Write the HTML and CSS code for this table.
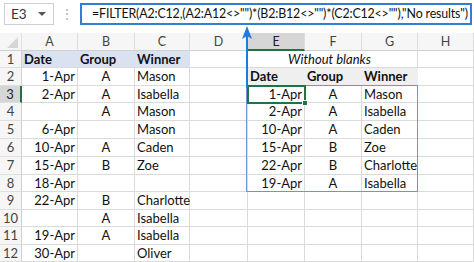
FILE: index.html
```html
<!DOCTYPE html>
<html>
<head>
<meta charset="utf-8">
<link rel="stylesheet" href="styles.css">
</head>
<body>
<div class="page">
  <div class="topbar">
    <div class="namebox"><span class="ref">E3</span><span class="caret"></span></div>
    <div class="dots">⋮</div>
    <div class="formula">=FILTER(A2:C12,(A2:A12&lt;&gt;"")*(B2:B12&lt;&gt;"")*(C2:C12&lt;&gt;""),"No results")</div>
  </div>
  <div class="sheet">
    <div class="h corner"><svg width="22" height="18" viewBox="0 0 22 18"><polygon points="18,4 18,15 7,15" fill="#d6d6d6"/></svg></div>
    <div class="h">A</div><div class="h">B</div><div class="h">C</div><div class="h">D</div><div class="h sel">E</div><div class="h">F</div><div class="h">G</div><div class="h">H</div>

    <div class="r">1</div><div class="c b fillb">Date</div><div class="c b fillb">Group</div><div class="c b fillb">Winner</div><div class="c"></div><div class="c it merged">Without blanks</div><div class="c"></div>

    <div class="r">2</div><div class="c rt">1-Apr</div><div class="c ct">A</div><div class="c">Mason</div><div class="c"></div><div class="c b fillg">Date</div><div class="c b fillg">Group</div><div class="c b fillg">Winner</div><div class="c"></div>

    <div class="r rsel">3</div><div class="c rt">2-Apr</div><div class="c ct">A</div><div class="c">Isabella</div><div class="c"></div><div class="c rt">1-Apr</div><div class="c ct">A</div><div class="c">Mason</div><div class="c"></div>

    <div class="r">4</div><div class="c rt"></div><div class="c ct">A</div><div class="c">Mason</div><div class="c"></div><div class="c rt">2-Apr</div><div class="c ct">A</div><div class="c">Isabella</div><div class="c"></div>

    <div class="r">5</div><div class="c rt">6-Apr</div><div class="c ct"></div><div class="c">Mason</div><div class="c"></div><div class="c rt">10-Apr</div><div class="c ct">A</div><div class="c">Caden</div><div class="c"></div>

    <div class="r">6</div><div class="c rt">10-Apr</div><div class="c ct">A</div><div class="c">Caden</div><div class="c"></div><div class="c rt">15-Apr</div><div class="c ct">B</div><div class="c">Zoe</div><div class="c"></div>

    <div class="r">7</div><div class="c rt">15-Apr</div><div class="c ct">B</div><div class="c">Zoe</div><div class="c"></div><div class="c rt">22-Apr</div><div class="c ct">B</div><div class="c">Charlotte</div><div class="c"></div>

    <div class="r">8</div><div class="c rt">18-Apr</div><div class="c ct"></div><div class="c"></div><div class="c"></div><div class="c rt">19-Apr</div><div class="c ct">A</div><div class="c">Isabella</div><div class="c"></div>

    <div class="r">9</div><div class="c rt">22-Apr</div><div class="c ct">B</div><div class="c">Charlotte</div><div class="c"></div><div class="c"></div><div class="c"></div><div class="c"></div><div class="c"></div>

    <div class="r">10</div><div class="c rt"></div><div class="c ct">A</div><div class="c">Isabella</div><div class="c"></div><div class="c"></div><div class="c"></div><div class="c"></div><div class="c"></div>

    <div class="r">11</div><div class="c rt">19-Apr</div><div class="c ct">A</div><div class="c">Isabella</div><div class="c"></div><div class="c"></div><div class="c"></div><div class="c"></div><div class="c"></div>

    <div class="r">12</div><div class="c rt">30-Apr</div><div class="c ct"></div><div class="c">Oliver</div><div class="c"></div><div class="c"></div><div class="c"></div><div class="c"></div><div class="c"></div>
  </div>

  <div class="spill"></div>
  <div class="selbox"><span class="handle"></span></div>
  <svg class="arrow" width="12" height="62" viewBox="0 0 12 62">
    <rect x="5" y="8" width="2" height="54" fill="#1e7be0"/>
    <path d="M6 0 L11 13 L6 10 L1 13 Z" fill="#1e7be0"/>
  </svg>
</div>
</body>
</html>
```

FILE: styles.css
```css
* { box-sizing: border-box; }
html, body { margin: 0; padding: 0; }
body {
  width: 474px;
  height: 262px;
  overflow: hidden;
  background: #ffffff;
  font-family: Lato, "Open Sans", sans-serif;
  color: #111;
}
.page { position: relative; width: 474px; height: 262px; }

.topbar {
  height: 33px;
  display: flex;
  align-items: flex-start;
  padding: 3px 2px 0 4px;
  background: #ffffff;
}
.namebox {
  width: 50px;
  height: 22px;
  border: 1px solid #cfcfcf;
  display: flex;
  align-items: center;
  justify-content: space-between;
  padding: 0 7px 0 6px;
  font-size: 13.5px;
  color: #333;
}
.caret {
  width: 0; height: 0;
  border-left: 4px solid transparent;
  border-right: 4px solid transparent;
  border-top: 4px solid #555;
}
.dots {
  width: 26px;
  text-align: center;
  color: #b5b5b5;
  font-size: 14px;
  line-height: 22px;
}
.formula {
  flex: 1;
  height: 22px;
  border: 2px solid #2f7fd6;
  font-size: 12.4px;
  letter-spacing: -0.15px;
  line-height: 18px;
  padding-left: 10px;
  white-space: nowrap;
  overflow: hidden;
  color: #111;
}

.sheet {
  display: grid;
  grid-template-columns: 22px 56px 57px 55px 58px 57px 57px 56px 56px;
  grid-template-rows: 18px 17px 18px 17px 18px 18px 18px 18px 17px 18px 17px 18px 17px;
  font-size: 13px;
}
.h {
  background: #f6f6f6;
  border-right: 1px solid #dedede;
  border-bottom: 1px solid #d0d0d0;
  color: #444;
  text-align: center;
  font-size: 12.5px;
  line-height: 17px;
}
.h.corner { padding: 0; overflow: hidden; }
.h.sel {
  background: #d6d6d6;
  border-bottom: 2px solid #217346;
  color: #222;
}
.r {
  background: #f6f6f6;
  border-right: 1px solid #d0d0d0;
  border-bottom: 1px solid #dedede;
  color: #444;
  text-align: center;
  font-size: 13px;
  line-height: 17px;
}
.r.rsel {
  background: #d6d6d6;
  border-right: 2px solid #217346;
  color: #222;
}
.c {
  border-right: 1px solid #dadada;
  border-bottom: 1px solid #dadada;
  padding: 0 2px;
  line-height: 17px;
  white-space: nowrap;
  overflow: visible;
}
.rt { text-align: right; padding-right: 2px; }
.ct { text-align: center; }
.b { font-weight: 700; }
.it { font-style: italic; }
.fillb { background: #dae2f1; border-right-color: #dae2f1; }
.fillg { background: #efefef; border-right-color: #efefef; }
.merged { grid-column: span 3; text-align: center; padding-right: 8px; }

.spill {
  position: absolute;
  left: 246px;
  top: 85px;
  width: 172px;
  height: 107px;
  border: 1.5px solid #6f93d6;
}
.selbox {
  position: absolute;
  left: 247px;
  top: 85px;
  width: 59px;
  height: 19px;
  border: 2px solid #217346;
}
.handle {
  position: absolute;
  right: -4px;
  bottom: -4px;
  width: 6px;
  height: 6px;
  background: #217346;
  border: 1px solid #fff;
}
.arrow {
  position: absolute;
  left: 241px;
  top: 26px;
}
```
